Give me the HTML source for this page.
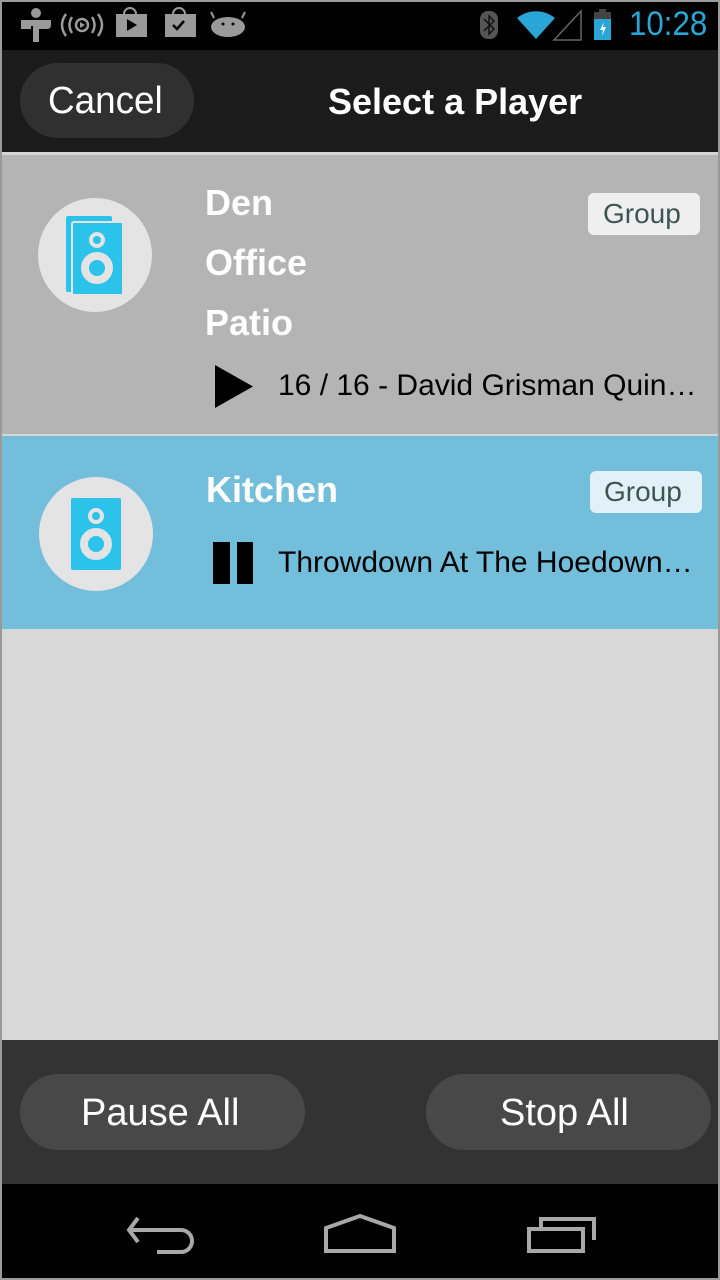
<!DOCTYPE html>
<html><head><meta charset="utf-8"><style>
*{margin:0;padding:0;box-sizing:border-box}
body{width:720px;height:1280px;background:#9a9a9a;position:relative;overflow:hidden;font-family:"Liberation Sans",sans-serif}
.a{position:absolute}
.t{white-space:nowrap}
</style></head><body>
<div class="a" style="left:2px;top:2px;width:716px;height:1276px;background:#d8d8d8"></div>
<!-- status bar -->
<div class="a" style="left:2px;top:2px;width:716px;height:48px;background:#000"></div>
<svg class="a" style="left:0;top:0" width="720" height="50">
 <g fill="#9a9a9a">
  <circle cx="36" cy="13" r="5"/>
  <path d="M21 20 h12 v6 h-12z M39 20 h12 v5 q0 4 -4 4 h-8z M33 20 h6 v22 h-6z M21 26 h10 v3 h-10z"/>
  <rect x="116" y="14" width="31" height="23"/>
  <rect x="165" y="14" width="31" height="23"/>
  <ellipse cx="228" cy="27" rx="17" ry="10"/>
  <path d="M214 18 l-3 -6 M242 18 l3 -6" stroke="#9a9a9a" stroke-width="2"/>
 </g>
 <path d="M124 14 a6 6 0 0 1 12 0 M173 14 a6 6 0 0 1 12 0" fill="none" stroke="#9a9a9a" stroke-width="2"/>
 <path d="M127 19 l10 6 l-10 6z" fill="#000"/>
 <path d="M173 25 l4 4 l7 -8" fill="none" stroke="#000" stroke-width="2.5"/>
 <circle cx="223" cy="24" r="1.5" fill="#000"/><circle cx="233" cy="24" r="1.5" fill="#000"/>
 <g fill="none" stroke="#9a9a9a" stroke-width="2.5">
  <path d="M72 17 q-5 8 0 16 M66 14 q-8 11 0 22 M92 17 q5 8 0 16 M98 14 q8 11 0 22"/>
  <circle cx="82" cy="25" r="6"/>
 </g>
 <path d="M80 22 l5 3 l-5 3z" fill="#9a9a9a"/>
 <rect x="480" y="11" width="18" height="28" rx="8" fill="#555"/>
 <path d="M484 19 l10 10 l-5 5 v-18 l5 5 l-10 10" fill="none" stroke="#111" stroke-width="1.5"/>
 <path d="M517 18 a30 30 0 0 1 38 0 l-19 21z" fill="#2aa6d6"/>
 <path d="M581 11 v29 h-27z" fill="none" stroke="#666" stroke-width="1.5"/>
 <rect x="594" y="12" width="17" height="28" fill="#444"/><rect x="599" y="9" width="7" height="4" fill="#444"/>
 <rect x="594" y="19" width="17" height="21" fill="#2aa6d6"/>
 <path d="M604 22 l-4 8 h3 l-1 6 l4 -9 h-3z" fill="#fff"/>
</svg>
<div class="a t" style="left:629px;top:5px;font-size:34px;color:#2aa6d6;transform:scaleX(.92);transform-origin:left">10:28</div>
<!-- action bar -->
<div class="a" style="left:2px;top:50px;width:716px;height:102px;background:#1b1b1b"></div>
<div class="a" style="left:20px;top:63px;width:174px;height:75px;border-radius:38px;background:#303030"></div>
<div class="a t" style="left:48px;top:80px;font-size:38px;color:#fff;transform:scaleX(.97);transform-origin:left">Cancel</div>
<div class="a t" style="left:328px;top:81px;font-size:36px;font-weight:bold;color:#fff;transform:scaleX(1.0);transform-origin:left">Select a Player</div>
<div class="a" style="left:2px;top:152px;width:716px;height:3px;background:#d5d5d5"></div>
<!-- row 1 -->
<div class="a" style="left:2px;top:155px;width:716px;height:279px;background:#b4b4b4"></div>
<div class="a" style="left:38px;top:198px;width:114px;height:114px;border-radius:50%;background:#e4e4e4"></div>
<svg class="a" style="left:60px;top:210px" width="70" height="90">
 <rect x="6" y="6" width="46" height="76" rx="2" fill="#2bc3ea"/>
 <rect x="12" y="12" width="51" height="73" rx="2" fill="#2bc3ea" stroke="#e4e4e4" stroke-width="2"/>
 <circle cx="37" cy="30" r="6" fill="none" stroke="#e4e4e4" stroke-width="4"/>
 <circle cx="37" cy="58" r="12" fill="none" stroke="#e4e4e4" stroke-width="8"/>
</svg>
<div class="a t" style="left:205px;top:173px;font-size:36px;font-weight:bold;color:#fff;line-height:60px">Den<br>Office<br>Patio</div>
<div class="a" style="left:588px;top:193px;width:112px;height:42px;border-radius:6px;background:#efefef"></div>
<div class="a t" style="left:603px;top:198px;font-size:28px;color:#3f5550">Group</div>
<svg class="a" style="left:215px;top:365px" width="38" height="43"><path d="M0 0 L38 21.5 L0 43z" fill="#000"/></svg>
<div class="a t" style="left:278px;top:369px;font-size:30px;color:#000;transform:scaleX(1.0);transform-origin:left">16 / 16 - David Grisman Quin…</div>
<div class="a" style="left:2px;top:434px;width:716px;height:2px;background:#d6d6d6"></div>
<!-- row 2 -->
<div class="a" style="left:2px;top:436px;width:716px;height:193px;background:#72bedb"></div>
<div class="a" style="left:39px;top:477px;width:114px;height:114px;border-radius:50%;background:#e4e4e4"></div>
<svg class="a" style="left:70px;top:497px" width="52" height="75">
 <rect x="1" y="1" width="50" height="72" rx="2" fill="#2bc3ea"/>
 <circle cx="26" cy="19" r="6" fill="none" stroke="#e4e4e4" stroke-width="4"/>
 <circle cx="26" cy="47" r="12" fill="none" stroke="#e4e4e4" stroke-width="8"/>
</svg>
<div class="a t" style="left:206px;top:469px;font-size:36px;font-weight:bold;color:#fff">Kitchen</div>
<div class="a" style="left:590px;top:471px;width:112px;height:42px;border-radius:6px;background:#e1f1f7"></div>
<div class="a t" style="left:604px;top:476px;font-size:28px;color:#3f5550">Group</div>
<div class="a" style="left:213px;top:542px;width:17px;height:42px;background:#000"></div>
<div class="a" style="left:237px;top:542px;width:16px;height:42px;background:#000"></div>
<div class="a t" style="left:278px;top:546px;font-size:30px;color:#000;transform:scaleX(1.0);transform-origin:left">Throwdown At The Hoedown…</div>
<!-- bottom bar -->
<div class="a" style="left:2px;top:1040px;width:716px;height:144px;background:#333"></div>
<div class="a" style="left:20px;top:1074px;width:285px;height:76px;border-radius:38px;background:#484848"></div>
<div class="a t" style="left:81px;top:1092px;font-size:38px;color:#fff;transform:scaleX(1.0);transform-origin:left">Pause All</div>
<div class="a" style="left:426px;top:1074px;width:285px;height:76px;border-radius:38px;background:#484848"></div>
<div class="a t" style="left:500px;top:1092px;font-size:38px;color:#fff;transform:scaleX(1.0);transform-origin:left">Stop All</div>
<!-- nav -->
<div class="a" style="left:2px;top:1184px;width:716px;height:94px;background:#000"></div>
<svg class="a" style="left:0;top:1184px" width="720" height="94">
 <g fill="none" stroke="#a8a8a8" stroke-width="4">
  <path d="M138 34 L129 46 L138 58"/>
  <path d="M130 46 H181 a11 11 0 0 1 0 22 H157"/>
  <path d="M326 67 V44 L360 32 L394 44 V67 Z"/>
  <rect x="529" y="45" width="54" height="22"/>
  <path d="M541 43 V35 H594 V56"/>
 </g>
</svg>
</body></html>
